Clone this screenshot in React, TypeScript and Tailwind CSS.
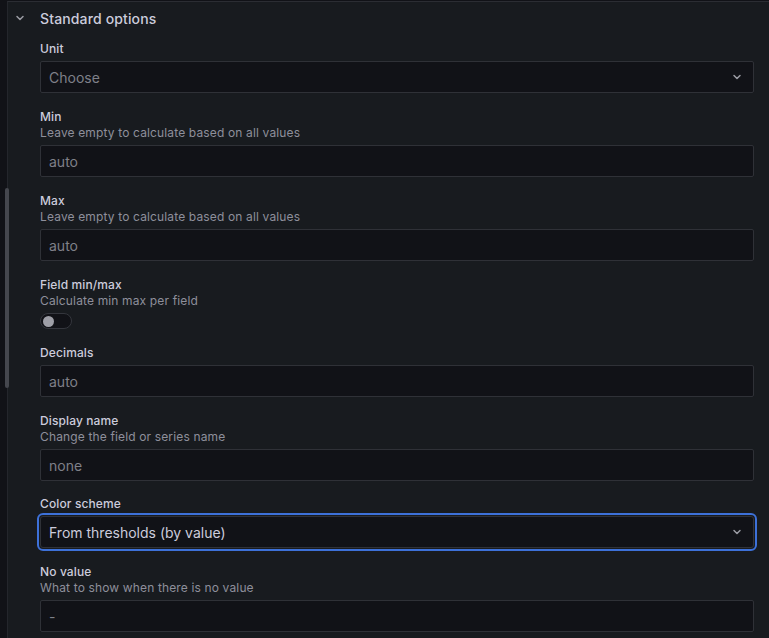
import React from "react";

const font = { fontFamily: "Inter, 'Noto Sans', sans-serif" };

function Chevron({ className = "" }: { className?: string }) {
  return (
    <svg width="16" height="16" viewBox="0 0 16 16" className={className}>
      <path d="M5 6.5 L8 9.5 L11 6.5" fill="none" stroke="currentColor" strokeWidth="1.5" strokeLinecap="round" strokeLinejoin="round" />
    </svg>
  );
}

function Label({ text, desc }: { text: string; desc?: string }) {
  return (
    <div className="mb-[4px]">
      <div className="text-[12px] leading-[16px] font-medium text-[#ccccdc] tracking-[0.01em]">{text}</div>
      {desc && <div className="text-[12px] leading-[16px] text-[#8e8f9b] tracking-[0.012em]">{desc}</div>}
    </div>
  );
}

function Input({ placeholder }: { placeholder: string }) {
  return (
    <div className="h-[32px] w-full rounded-[2px] border border-[#2f3137] bg-[#111217] flex items-center pl-[8px] text-[14px] text-[#7f8089]">
      {placeholder}
    </div>
  );
}

function Select({ value, placeholder, focused }: { value?: string; placeholder?: string; focused?: boolean }) {
  return (
    <div
      className={
        focused
          ? "h-[32px] w-full border border-[#2f3137] bg-[#111217] flex items-center pl-[8px] pr-[8px] text-[14px] outline-2 outline-offset-[1px] outline-[#3d71d9] rounded-[3px]"
          : "h-[32px] w-full rounded-[2px] border border-[#2f3137] bg-[#111217] flex items-center pl-[8px] pr-[8px] text-[14px]"
      }
    >
      <span className={value ? "flex-1 text-[#ccccdc]" : "flex-1 text-[#7f8089]"}>{value ?? placeholder}</span>
      <Chevron className="text-[#9a9ba3]" />
    </div>
  );
}

function Field({ children, tight }: { children: React.ReactNode; tight?: boolean }) {
  return <div className={tight ? "mb-[15px]" : "mb-[16px]"}>{children}</div>;
}

export default function App() {
  return (
    <div className="relative w-[769px] h-[638px] overflow-hidden flex bg-[#111217]" style={font}>
      <div className="w-[7px] h-full shrink-0 bg-[#111217]" />
      <div className="flex-1 h-full bg-[#181b1f] border-l border-[#24262c] mt-[1px] border-t border-t-[#2b2d33]">
        <div className="h-[32px] flex items-center pl-[4px]">
          <Chevron className="text-[#9a9ba3] w-[16px] h-[16px] shrink-0" />
          <span className="ml-[12px] text-[14px] font-medium text-[#ccccdc] tracking-[0.01em]">Standard options</span>
        </div>
        <div className="pl-[32px] pr-[15px] pt-[7px]">
          <Field>
            <Label text="Unit" />
            <Select placeholder="Choose" />
          </Field>
          <Field>
            <Label text="Min" desc="Leave empty to calculate based on all values" />
            <Input placeholder="auto" />
          </Field>
          <Field>
            <Label text="Max" desc="Leave empty to calculate based on all values" />
            <Input placeholder="auto" />
          </Field>
          <Field>
            <Label text="Field min/max" desc="Calculate min max per field" />
            <div className="w-[32px] h-[16px] rounded-full border border-[#34363d] bg-[#111217] flex items-center pl-[2px]">
              <div className="w-[11px] h-[11px] rounded-full bg-[#9e9fa7]" />
            </div>
          </Field>
          <Field>
            <Label text="Decimals" />
            <Input placeholder="auto" />
          </Field>
          <Field tight>
            <Label text="Display name" desc="Change the field or series name" />
            <Input placeholder="none" />
          </Field>
          <Field>
            <Label text="Color scheme" />
            <Select value="From thresholds (by value)" focused />
          </Field>
          <Field>
            <Label text="No value" desc="What to show when there is no value" />
            <Input placeholder="-" />
          </Field>
        </div>
      </div>
      <div className="absolute left-[5px] top-[188px] w-[4px] h-[200px] rounded-full bg-[#45474e]" />
    </div>
  );
}
